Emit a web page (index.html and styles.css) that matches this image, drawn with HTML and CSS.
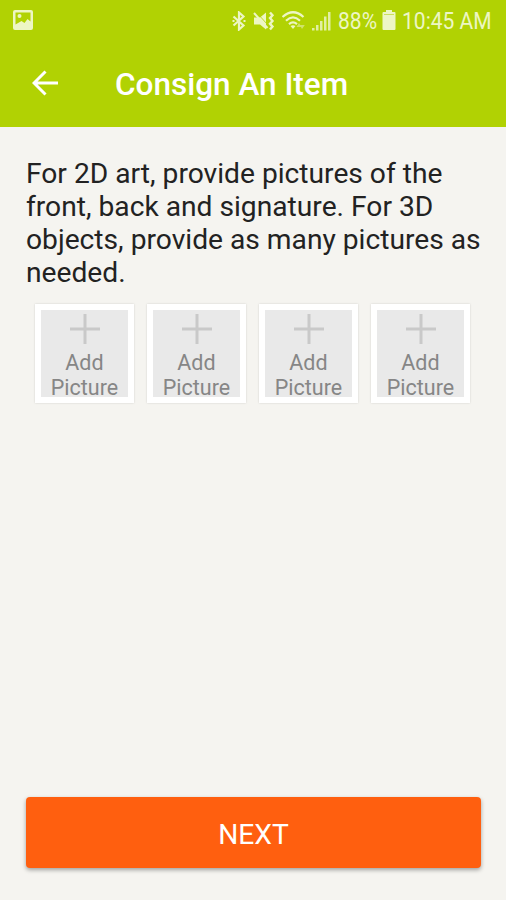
FILE: index.html
```html
<!DOCTYPE html>
<html lang="en">
<head>
    <meta charset="UTF-8">
    <meta name="viewport" content="width=device-width, initial-scale=1.0">
    <title>Consign An Item</title>
    <link rel="stylesheet" href="styles.css">
</head>
<body>
    <div class="screen">
        <header class="header">
            <div class="status-bar">
                <svg class="icon-image" width="20" height="20" viewBox="0 0 20 20">
                    <rect width="20" height="20" rx="2" fill="#edf6c4"/>
                    <path d="M2.500 2.500h15v9l-3-2.500-3 4-3-2-6 3.500z" fill="#b1d203"/>
                    <circle cx="6.500" cy="6" r="2" fill="#edf6c4"/>
                </svg>
                <div class="status-right">
                    <svg class="icon-bluetooth" width="14" height="20" viewBox="0 0 14 20">
                        <path d="M1.500 5.500l10 9L7 18.500v-17l4.500 4-10 9" fill="none" stroke="#edf6c4" stroke-width="2.200"/>
                        <path d="M0.500 10h2M11.500 10h2" stroke="#edf6c4" stroke-width="2.200"/>
                    </svg>
                    <svg class="icon-mute" width="22" height="20" viewBox="0 0 22 20">
                        <path d="M1 6.500h6l6-5v17l-6-5H1z" fill="#edf6c4"/>
                        <path d="M1 2l13.500 15" stroke="#edf6c4" stroke-width="2"/>
                        <path d="M5 3l9 10" stroke="#b1d203" stroke-width="0.800"/>
                        <path d="M17 1.500l2.500 2.800-2.500 2.800 2.500 2.900-2.500 2.800 2.500 2.800-2.500 2.900" fill="none" stroke="#edf6c4" stroke-width="2.400"/>
                    </svg>
                    <svg class="icon-wifi" width="26" height="20" viewBox="0 0 26 20">
                        <g fill="none" stroke="#edf6c4" stroke-width="2.200">
                            <path d="M0.500 6q10.500-9.500 21 0"/>
                            <path d="M4 9.700q7-6.500 14 0"/>
                            <path d="M7 13.200q4-3.500 8 0"/>
                        </g>
                        <path d="M8.500 15q2.500-1.500 5 0L11 18z" fill="#edf6c4"/>
                        <path d="M17 12l2.500 4h-5zM20 18l-2.200-4h5z" fill="#cfe36b"/>
                    </svg>
                    <svg class="icon-signal" width="19" height="20" viewBox="0 0 19 20">
                        <path d="M0 17h2.500v2.500H0zM4 14h2.500v5.500H4zM8 10h2.500v9.500H8zM12 5.500h2.500v14H12zM16 1h2.500v18.500H16z" fill="#e2efa3"/>
                    </svg>
                    <span class="battery-text"><span class="condensed">88%</span></span>
                    <svg class="icon-battery" width="14" height="20" viewBox="0 0 14 20">
                        <path d="M4 0h6v2h2.500q1 0 1 1v16q0 1-1 1h-11q-1 0-1-1V3q0-1 1-1H4z" fill="#edf6c4"/>
                        <path d="M2 4.500h10" stroke="#c9df5c" stroke-width="1"/>
                    </svg>
                    <span class="clock"><span class="condensed">10:45 AM</span></span>
                </div>
            </div>
            <div class="toolbar">
                <svg class="icon-back" width="26" height="26" viewBox="0 0 26 26">
                    <path d="M13.500 1.500L2 13l11.500 11.500M2 13h24" fill="none" stroke="#fff" stroke-width="3"/>
                </svg>
                <h1>Consign An Item</h1>
            </div>
        </header>

        <main class="content">
            <p class="intro">For 2D art, provide pictures of the front, back and signature. For 3D objects, provide as many pictures as needed.</p>
            <div class="pictures">
                <div class="picture">
                    <svg class="plus" width="30" height="30" viewBox="0 0 30 30"><path d="M15 0v30M0 15h30" stroke="#c9c9c9" stroke-width="3"/></svg>
                    <span>Add<br>Picture</span>
                </div>
                <div class="picture">
                    <svg class="plus" width="30" height="30" viewBox="0 0 30 30"><path d="M15 0v30M0 15h30" stroke="#c9c9c9" stroke-width="3"/></svg>
                    <span>Add<br>Picture</span>
                </div>
                <div class="picture">
                    <svg class="plus" width="30" height="30" viewBox="0 0 30 30"><path d="M15 0v30M0 15h30" stroke="#c9c9c9" stroke-width="3"/></svg>
                    <span>Add<br>Picture</span>
                </div>
                <div class="picture">
                    <svg class="plus" width="30" height="30" viewBox="0 0 30 30"><path d="M15 0v30M0 15h30" stroke="#c9c9c9" stroke-width="3"/></svg>
                    <span>Add<br>Picture</span>
                </div>
            </div>
            <button class="next">NEXT</button>
        </main>
    </div>
</body>
</html>
```
FILE: styles.css
```css
* {
    box-sizing: border-box;
}
body {
    margin: 0;
    font-family: Roboto, "Liberation Sans", sans-serif;
    background-color: #f5f4f0;
}
svg {
    display: block;
    flex: none;
}
.screen {
    display: flex;
    flex-direction: column;
    height: 900px;
}
.header {
    height: 127px;
    background-color: #b1d203;
}
.status-bar {
    display: flex;
    justify-content: space-between;
    align-items: center;
    height: 42px;
    padding: 0 14px 0 13px;
}
.icon-image {
    margin-top: -2px;
}
.status-right {
    display: flex;
    align-items: center;
    color: #edf6c4;
    font-size: 23.5px;
    line-height: 42px;
}
.icon-bluetooth {
    margin-right: 7px;
}
.icon-mute {
    margin-right: 7px;
}
.icon-wifi {
    margin-right: 4px;
}
.icon-signal {
    margin-right: 7px;
}
.icon-battery {
    margin-top: -2px;
}
.battery-text {
    width: 39px;
    margin-right: 5px;
}
.clock {
    width: 90px;
    margin-left: 6px;
}
.condensed {
    display: inline-block;
    white-space: nowrap;
    transform: scaleX(0.895);
    transform-origin: left center;
}
.toolbar {
    display: flex;
    align-items: center;
    height: 82px;
    padding-left: 32px;
}
.toolbar h1 {
    margin: 2px 0 0 57px;
    color: #fff;
    font-size: 31.5px;
    font-weight: 500;
}
.content {
    display: flex;
    flex: 1;
    flex-direction: column;
    padding: 30px 24px 32px 26px;
}
.intro {
    margin: 0;
    color: #222;
    font-size: 28.2px;
    line-height: 33px;
}
.pictures {
    display: flex;
    gap: 13px;
    margin: 15px 0 0 9px;
}
.picture {
    display: flex;
    flex-direction: column;
    align-items: center;
    width: 99px;
    height: 99px;
    padding-top: 4px;
    border: 6px solid #fff;
    background-color: #e9e9e9;
    box-shadow: 0 0 2px rgba(0, 0, 0, 0.15);
    color: #868686;
    font-size: 21.5px;
    line-height: 25px;
    text-align: center;
}
.picture span {
    margin-top: 6px;
}
.next {
    height: 71px;
    margin-top: auto;
    margin-right: 1px;
    padding: 3px 0 0;
    border: none;
    border-radius: 4px;
    background-color: #ff5f0f;
    box-shadow: 0 2px 4px rgba(0, 0, 0, 0.35);
    color: #fff;
    font-family: inherit;
    font-size: 28.2px;
}
```
